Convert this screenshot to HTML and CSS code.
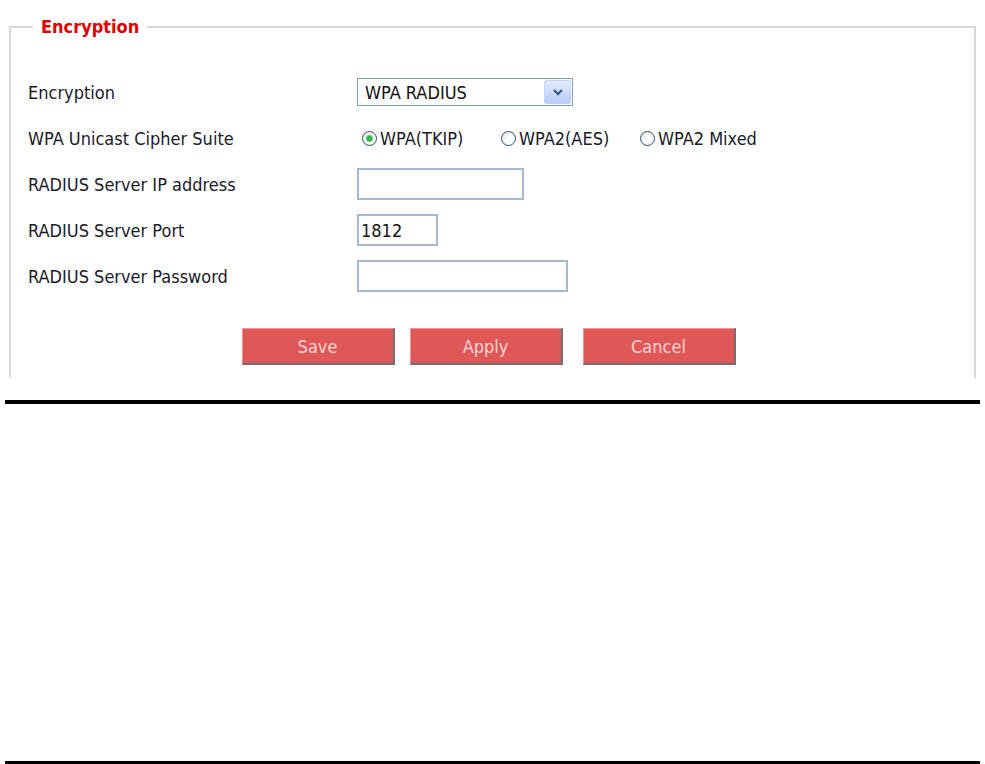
FILE: index.html
```html
<!DOCTYPE html>
<html lang="en">
<head>
    <meta charset="UTF-8">
    <title>Wireless Security - Encryption</title>
    <link rel="stylesheet" href="styles.css">
</head>
<body>
    <div class="panel">
        <fieldset class="group">
            <legend>Encryption</legend>
            <div class="form">
                <div class="row">
                    <label class="label" for="enc">Encryption</label>
                    <div class="field">
                        <div class="select-box">
                            <select id="enc">
                                <option>WPA RADIUS</option>
                            </select>
                            <span class="select-btn">
                                <svg width="12" height="9" viewBox="0 0 12 9"><path d="M2 2 L6 6 L10 2" fill="none" stroke="#3c5a96" stroke-width="2.4"/></svg>
                            </span>
                        </div>
                    </div>
                </div>
                <div class="row">
                    <span class="label">WPA Unicast Cipher Suite</span>
                    <div class="field radios">
                        <label class="radio"><input type="radio" name="cipher" checked> WPA(TKIP)</label>
                        <label class="radio"><input type="radio" name="cipher"> WPA2(AES)</label>
                        <label class="radio"><input type="radio" name="cipher"> WPA2 Mixed</label>
                    </div>
                </div>
                <div class="row">
                    <label class="label" for="ip">RADIUS Server IP address</label>
                    <div class="field"><input id="ip" class="text ip" type="text"></div>
                </div>
                <div class="row">
                    <label class="label" for="port">RADIUS Server Port</label>
                    <div class="field"><input id="port" class="text port" type="text" value="1812"></div>
                </div>
                <div class="row">
                    <label class="label" for="pw">RADIUS Server Password</label>
                    <div class="field"><input id="pw" class="text pw" type="password"></div>
                </div>
                <div class="buttons">
                    <button class="btn">Save</button>
                    <button class="btn">Apply</button>
                    <button class="btn cancel">Cancel</button>
                </div>
            </div>
        </fieldset>
    </div>
    <div class="rule first"></div>
    <div class="rule second"></div>
</body>
</html>
```

FILE: styles.css
```css
body {
    margin: 0;
    font-family: "DejaVu Sans Condensed", "DejaVu Sans", Tahoma, sans-serif;
    font-size: 18px;
    color: #1a1a2a;
    background: #fff;
}
.panel {
    height: 378px;
    overflow: hidden;
    padding-top: 16px;
    box-sizing: border-box;
    margin: 0 9px 0 9px;
}
.group {
    margin: 0;
    padding: 0;
    border: 2px solid #d8d8d8;
    min-height: 500px;
}
.group legend {
    margin-left: 22px;
    padding: 0 8px;
    color: #e00000;
    font-weight: bold;
    font-size: 18px;
    line-height: 22px;
}
.form {
    padding: 38px 0 0 17px;
}
.row {
    display: flex;
    align-items: center;
    height: 32px;
    margin-bottom: 14px;
}
.label {
    width: 329px;
    flex-shrink: 0;
}
.field {
    display: flex;
    align-items: center;
}
.select-box {
    position: relative;
    width: 216px;
    height: 28px;
}
.select-box select {
    appearance: none;
    -webkit-appearance: none;
    width: 100%;
    height: 100%;
    margin: 0;
    border: 1px solid #7f9db9;
    background: #fff;
    font-family: inherit;
    font-size: 18px;
    color: #111;
    padding: 0 0 0 7px;
    border-radius: 0;
}
.select-btn {
    position: absolute;
    top: 2px;
    right: 2px;
    width: 27px;
    height: 24px;
    background: linear-gradient(#e3ecfd, #b6cbf6);
    border: 1px solid #c3d3fd;
    box-sizing: border-box;
    border-radius: 2px;
    display: flex;
    align-items: center;
    justify-content: center;
    pointer-events: none;
}
.radios {
    padding-left: 5px;
}
.radio {
    display: flex;
    align-items: center;
    width: 139px;
    flex-shrink: 0;
}
.radio input {
    appearance: none;
    -webkit-appearance: none;
    width: 15px;
    height: 15px;
    margin: 0 3px 0 0;
    border: 1px solid #2f4f6f;
    border-radius: 50%;
    background: radial-gradient(circle at 65% 65%, #fff 30%, #dcdcd6 100%);
    box-sizing: border-box;
}
.radio input:checked {
    background: radial-gradient(circle, #2fb84a 0, #2fb84a 2.5px, #a6e0a8 3.5px, #fff 4px, #fff 40%, #dcdcd6 100%);
}
.text {
    height: 32px;
    box-sizing: border-box;
    border: 2px solid #a5b9d2;
    font-family: inherit;
    font-size: 18px;
    padding: 0 2px;
    color: #111;
    margin: 0;
}
.ip {
    width: 167px;
}
.port {
    width: 81px;
}
.pw {
    width: 211px;
}
.buttons {
    display: flex;
    justify-content: center;
    gap: 15px;
    margin-top: 36px;
    padding-right: 25px;
}
.btn {
    width: 153px;
    height: 37px;
    background: #e05757;
    color: #fbd3d3;
    font-family: inherit;
    font-size: 18px;
    border: 1px solid;
    border-color: #f09090 #707070 #707070 #f09090;
    border-width: 1px 2px 2px 1px;
    padding: 0;
}
.cancel {
    margin-left: 5px;
}
.rule {
    height: 4px;
    background: #000;
    margin: 0 5px;
}
.rule.first {
    margin-top: 22px;
}
.rule.second {
    margin-top: 357px;
}
```
